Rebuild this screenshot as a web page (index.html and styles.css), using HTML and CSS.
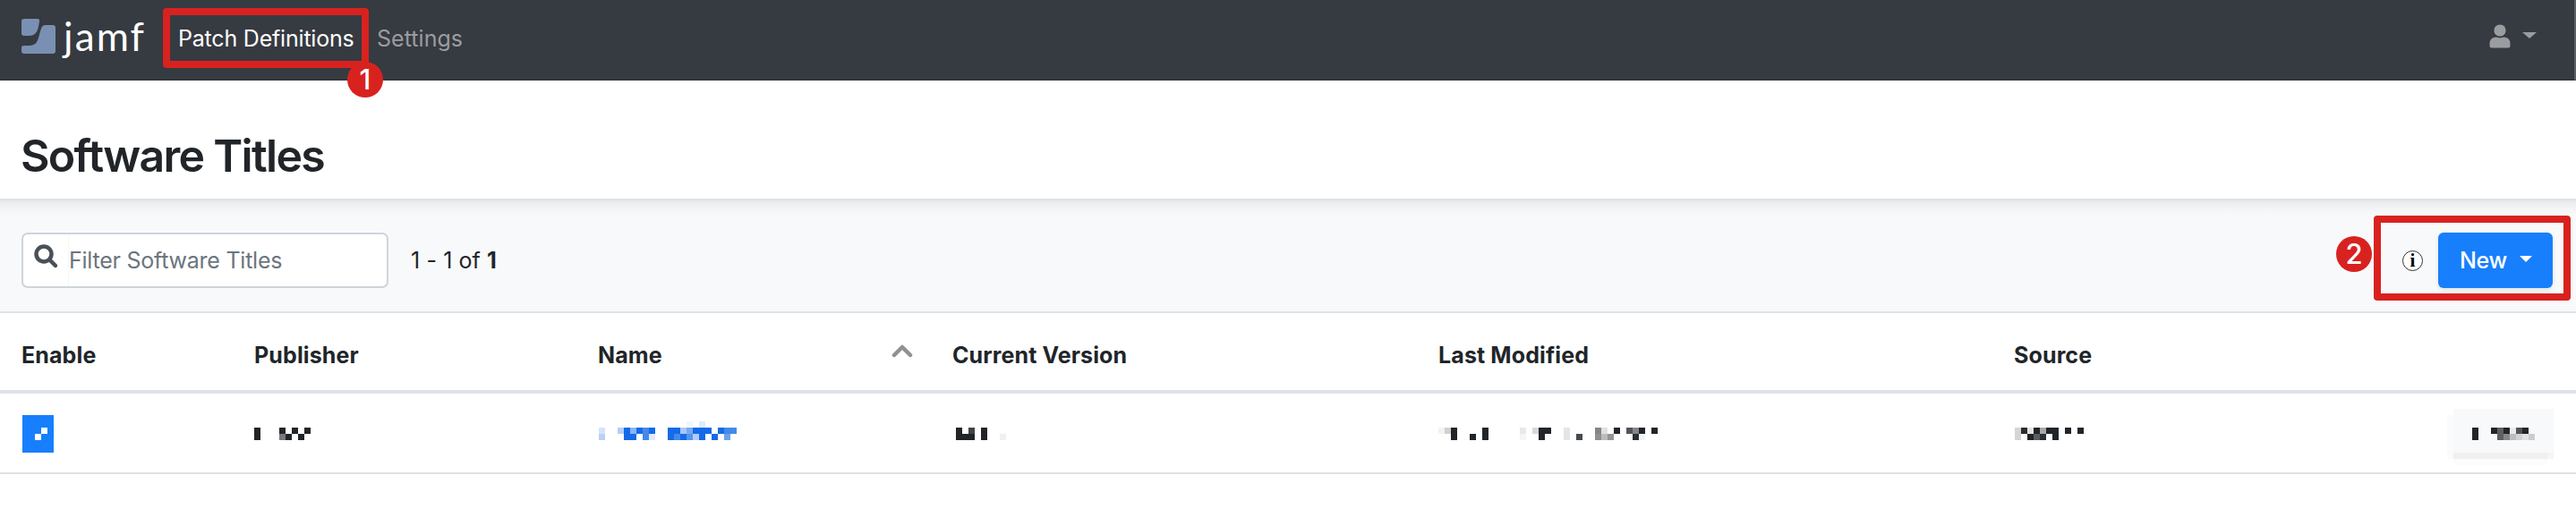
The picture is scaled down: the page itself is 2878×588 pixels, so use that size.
FILE: index.html
```html
<!DOCTYPE html>
<html lang="en">
<head>
<meta charset="utf-8">
<title>Software Titles</title>
<link rel="stylesheet" href="styles.css">
</head>
<body>
<header class="navbar">
  <a class="brand">
    <svg class="brand-mark" width="38" height="40" viewBox="0 0 38 40"><path d="M3 0H18Q20.500 0 20 3C18.500 13 17 19 8 19H3Q0 19 0 16V3Q0 0 3 0Z"/><path d="M27 7H35Q38 7 38 10V36Q38 39 35 39H3Q0 39 0 36V32Q0 30 3 30H8C17 30 18 25 20 18C22 10 23 7 27 7Z"/></svg>
    <span class="brand-name">jamf</span>
  </a>
  <nav class="nav-links">
    <a class="nav-link active">Patch Definitions<span class="callout callout-nav"><b class="badge badge-one">1</b></span></a>
    <a class="nav-link settings">Settings</a>
  </nav>
  <div class="user-menu">
    <svg width="24" height="27" viewBox="0 0 24 27"><circle cx="12" cy="7" r="6.600"/><path d="M7 14.500Q9 14.500 10 15Q12 15.800 14 15Q15 14.500 17 14.500Q23.500 15 23.500 22V24Q23.500 26.500 21 26.500H3Q.5 26.500 .5 24V22Q.5 15 7 14.500Z"/></svg>
    <i class="caret caret-user"></i>
  </div>
</header>
<section class="page-title"><h1>Software Titles</h1></section>
<section class="toolbar">
  <div class="filter">
    <span class="filter-icon"><svg width="28" height="28" viewBox="0 0 28 28"><circle cx="11" cy="11" r="8.500"/><path d="M17.500 17.500L24 24"/></svg></span>
    <span class="filter-text">Filter Software Titles</span>
  </div>
  <div class="count">1 - 1 of <b>1</b></div>
  <div class="actions">
    <span class="info">i</span>
    <button class="new-button">New<i class="caret caret-new"></i></button>
    <span class="callout callout-new"><b class="badge badge-two">2</b></span>
  </div>
</section>
<main class="table">
  <div class="row head">
    <span>Enable</span><span>Publisher</span>
    <span class="sorted"><span>Name</span><svg width="24" height="16" viewBox="0 0 24 16"><path d="M3 13L12 4L21 13"/></svg></span>
    <span>Current Version</span><span>Last Modified</span><span>Source</span><span></span>
  </div>
  <div class="row body" id="titles"></div>
</main>
<script src="mosaic.js"></script>
</body>
</html>
```
FILE: mosaic.js
```js
// Each cell is masked by 7px blocks: [column, row, colour, height, width]
const D = '#212529', B = '#156ae9', M = '#4389ea';
const columns = [
  [[0,0,'#177ffc',6,5],[3,2,'#ffffff'],[2,3,'#ffffff']],
  [[0,2,D,2],[4,2,D],[4,3,'#77787b'],[5,3,D],[6,2,D],[7,3,D],[8,2,D]],
  [[0,2,'#d5e4fa'],[0,3,'#b9d1f5'],[3,2,'#b4cef6'],[4,2,B,2],[5,2,'#8ab4f3'],[5,3,B],[6,2,B],[7,2,M,2],[8,2,B],[8,3,'#dfeafc'],[11,2,B,2],[12,2,B],[12,3,M],[13,2,'#a8c8f6'],[13,3,B],[14,1,'#f0f6fd'],[14,2,'#78a9f0'],[14,3,'#5595ec'],[15,2,B],[15,3,'#b0cdf7'],[16,1,'#e0ebfb'],[16,2,B,2],[17,2,B],[18,3,B],[19,2,B],[20,2,M],[20,3,'#6ca0f0'],[21,2,M]],
  [[0,2,D,2],[1,3,D],[2,2,'#414347'],[2,3,D],[4,2,D,2],[7,3,'#f1f1f1']],
  [[0,2,'#f2f2f2'],[1,2,'#d0d0d0'],[2,2,D,2],[5,3,D],[7,2,D,2],[13,2,'#e8e8e8'],[13,3,'#f5f5f5'],[15,2,'#d8d8d8'],[16,2,D,2],[17,2,D],[17,3,'#f8f8f8'],[20,2,'#e5e5e5',2],[22,3,'#444b50'],[25,2,'#858585'],[25,3,'#909090'],[26,2,'#e0e0e0'],[26,3,'#bbbbbb'],[27,3,'#959595'],[28,2,D],[30,2,'#51555a'],[31,2,'#85868a'],[31,3,'#2b2f33'],[32,2,D],[32,3,'#f3f3f3'],[34,2,D]],
  [[0,2,'#d5d5d5',2],[1,2,'#2a2e33'],[2,2,'#e5e5e5'],[2,3,D],[3,2,D],[3,3,'#5a5e63'],[4,2,'#a8a8a8'],[4,3,'#2b2f33'],[5,2,D],[6,2,D,2],[8,2,D],[10,2,D]],
  [[0,0,'#fbfbfc',7,1],[1,7,'#fcfcfd',1,15],[1,-1,'#f8f9fb',7,16],[1,6,'#f0f0f1',1,15],[16,6,'#f5f5f6'],[4,2,D,2],[7,2,D],[8,2,'#5c5f63',2],[9,2,D],[9,3,'#858688'],[10,2,'#ebebeb'],[10,3,'#bdbdbd'],[11,2,'#505458'],[11,3,'#d2d2d2'],[12,2,D],[12,3,'#e2e2e2'],[13,3,'#cccccc']]
];
document.getElementById('titles').innerHTML = columns.map((c, n) => {
  const width = n === 6 ? 126 : 252;
  return `<span><svg class="mosaic" width="${width}" height="63" viewBox="0 -7 ${width} 63" shape-rendering="crispEdges">` +
    c.map(([x, y, f, h = 1, w = 1]) => `<rect x="${x * 7}" y="${y * 7}" width="${w * 7}" height="${h * 7}" fill="${f}"/>`).join('') +
    '</svg></span>';
}).join('');
```
FILE: styles.css
```css
* { box-sizing: border-box; }
body { margin: 0; background: #fff; color: #212529; font: 400 25px/30px Inter, "Liberation Sans", sans-serif; overflow: hidden; }
.navbar { height: 90px; background: #363a41; border-bottom: 1px solid #2f3237; border-right: 2px solid #5e5f61; display: flex; align-items: flex-start; padding-left: 24px; }
.brand { display: flex; width: 158px; height: 89px; }
.brand-mark { flex: none; fill: #7a90b2; margin-top: 21px; }
.brand-name { color: #fff; font: 400 44px/50px Lato, sans-serif; margin: 15px 0 0 9px; letter-spacing: 2.100px; }
.nav-links { display: flex; }
.nav-link { padding: 28px 0; color: #9a9c9f; letter-spacing: -.2px; }
.nav-link.settings { letter-spacing: .05px; }
.nav-link.active { position: relative; width: 239px; padding-left: 17px; color: #fff; white-space: nowrap; }
.callout { position: absolute; border: 8px solid #d8221f; border-radius: 4px; }
.callout-nav { left: 0; top: 9px; width: 230px; height: 67px; }
.callout-new { right: 6px; top: 17px; width: 220px; height: 95px; }
.badge { position: absolute; width: 40px; height: 40px; border-radius: 50%; background: #d8221f; color: #fff; font: 500 31px/40px Inter, sans-serif; letter-spacing: 0; text-align: center; }
.badge-one { left: 198px; top: 52px; }
.badge-two { left: -50px; top: 15px; }
.user-menu { margin-left: auto; margin-right: 42px; padding-top: 27px; display: flex; gap: 13px; }
.user-menu svg { fill: #9a9c9f; }
.caret { display: block; width: 0; height: 0; border: solid transparent; border-top-color: currentColor; border-bottom: 0; }
.caret-user { color: #9a9c9f; border-width: 7px 8px 0; margin-top: 9px; }
.page-title { height: 134px; padding: 54px 23px 0; border-bottom: 2px solid #dee2e6; }
h1 { margin: 0; font-weight: 600; font-size: 50px; line-height: 60px; letter-spacing: -1.700px; }
.toolbar { position: relative; height: 126px; padding: 36px 26px 0 24px; display: flex; align-items: flex-start; background: linear-gradient(#e7e8ea, #f0f1f3 6px, #f8f9fb 16px); border-bottom: 2px solid #dee2e6; }
.filter { width: 410px; height: 62px; border: 2px solid #ced4da; border-radius: 7px; background: #fff; display: flex; }
.filter-icon { width: 51px; padding: 11px 0 0 12px; border-right: 1px solid #f5f6f8; }
.filter-icon svg { fill: none; stroke: #495057; stroke-width: 4.500; stroke-linecap: round; }
.filter-text { color: #6c757d; line-height: 58px; letter-spacing: -.24px; }
.count { line-height: 62px; margin-left: 25px; letter-spacing: .1px; }
.actions { margin-left: auto; display: flex; align-items: flex-start; }
.info { width: 23px; height: 23px; border: 1px solid #333; border-radius: 50%; margin: 20px 17px 0 0; color: #000; background: #fff; font: 700 21px/20px "Liberation Serif", serif; text-align: center; }
.new-button { width: 128px; height: 62px; border: 0; border-radius: 6px; background: #177ffc; color: #fff; font: 500 25px/30px Inter, sans-serif; letter-spacing: -.3px; display: flex; align-items: center; padding: 0 0 0 24px; box-shadow: 0 2px 5px #00000018; }
.caret-new { border-width: 7px 7px 0; margin: -3px 0 0 14px; }
.row { display: grid; grid-template-columns: 260px 384px 396px 543px 643px 484px 1fr; padding-left: 24px; }
.head { height: 90px; border-bottom: 4px solid #dee2e6; padding-top: 32px; font-weight: 700; letter-spacing: .12px; }
.sorted { display: flex; justify-content: space-between; padding-right: 44px; }
.sorted svg { fill: none; stroke: #8f9193; stroke-width: 4.500; stroke-linecap: round; stroke-linejoin: round; margin-top: 2px; }
.body { grid-template-columns: 259px 385px 399px 539px 644px 483px 1fr; height: 90px; border-bottom: 2px solid #dee2e6; padding: 17px 0 0 25px; }
.mosaic { display: block; }
```
